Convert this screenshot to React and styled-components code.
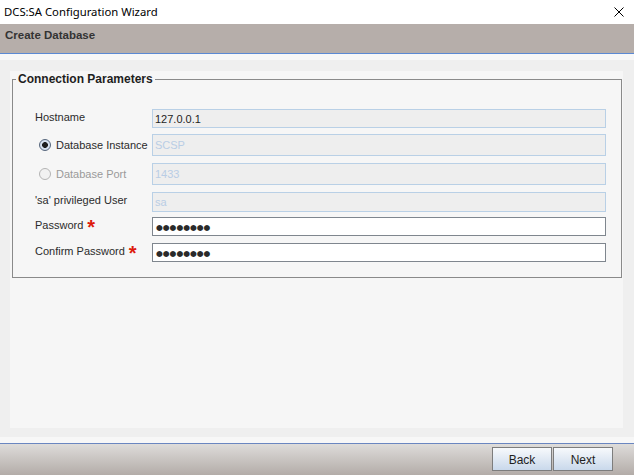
import React from "react";
import styled, { createGlobalStyle } from "styled-components";

const Global = createGlobalStyle`
  html, body { margin: 0; padding: 0; }
  body { width: 634px; height: 475px; overflow: hidden; background: #efefef; }
  * { box-sizing: border-box; }
`;

const Window = styled.div`
  width: 634px;
  height: 475px;
  display: flex;
  flex-direction: column;
  font-family: "Liberation Sans", Arial, sans-serif;
  color: #2b2b2b;
`;

const TitleBar = styled.div`
  height: 24px;
  flex: none;
  background: #ffffff;
  display: flex;
  align-items: center;
  justify-content: space-between;
  padding: 0 10px 0 4px;
`;

const TitleText = styled.span`
  font-family: "Noto Sans", "Open Sans", sans-serif;
  font-size: 11.3px;
  color: #000;
  margin-top: -2px;
`;

const CloseButton = styled.svg`
  width: 10px;
  height: 10px;
  margin-top: -1px;
`;

const Header = styled.div`
  height: 29px;
  flex: none;
  background: #b6aeaa;
  padding: 5px 5px 0;
  font-size: 11.5px;
  font-weight: bold;
  color: #333;
`;

const Rule = styled.div`
  height: 1px;
  flex: none;
  background: ${(p) => p.$color};
`;

const Body = styled.div`
  flex: none;
  height: 389px;
  background: #efefef;
  border-top: 6px solid #f7f7f7;
  border-bottom: 6px solid #f7f7f7;
  padding: 11px 11px 9px 10px;
  display: flex;
`;

const Panel = styled.div`
  flex: 1;
  background: #f6f6f6;
  padding: 1px 1px 0 2px;
`;

const Group = styled.fieldset`
  margin: 0;
  padding: 0 15px 15px 22px;
  border: 1px solid #8a8a8a;
  min-width: 0;
`;

const Legend = styled.legend`
  margin-left: -19px;
  padding: 0 2px;
  font-size: 12px;
  font-weight: bold;
  color: #1e1e1e;
  line-height: 14px;
`;

const Rows = styled.div`
  display: flex;
  flex-direction: column;
  padding-top: 23px;
`;

const Row = styled.div`
  display: grid;
  grid-template-columns: 117px 1fr;
  align-items: center;
  height: ${(p) => p.$h}px;
  margin-top: ${(p) => p.$mt}px;
`;

const Label = styled.div`
  display: flex;
  align-items: center;
  font-size: 11px;
  padding-bottom: ${(p) => p.$lift}px;
  color: ${(p) => (p.$disabled ? "#9a9a9a" : "#2b2b2b")};
  white-space: nowrap;
`;

const Radio = styled.span`
  width: 12px;
  height: 12px;
  border-radius: 50%;
  margin: 0 5px 0 4px;
  flex: none;
  border: 1px solid ${(p) => (p.$checked ? "#55657c" : "#b4b4b4")};
  background: ${(p) =>
    p.$checked
      ? "radial-gradient(circle, #1e1e1e 0 2.6px, #d6e1ef 3.2px 100%)"
      : "#f1f1f1"};
`;

const Star = styled.span`
  color: #dd1a0c;
  font-size: 20px;
  font-weight: bold;
  line-height: 10px;
  height: 10px;
  margin-left: 4px;
  padding-top: 2px;
`;

const Field = styled.div`
  height: 100%;
  display: flex;
  align-items: center;
  padding-left: 2px;
  font-size: 11px;
  border: 1px solid ${(p) => (p.$editable ? "#7f868e" : "#b9d0e6")};
  background: ${(p) => (p.$editable ? "#ffffff" : "#eeeeee")};
  color: ${(p) => (p.$muted ? "#b9cde5" : "#1e1e1e")};
`;

const Dots = styled.span`
  font-family: "DejaVu Sans", sans-serif;
  font-size: 7.8px;
  letter-spacing: 0;
  color: #2a2a2a;
  padding-left: 1px;
  padding-top: 1px;
`;

const Footer = styled.div`
  flex: 1;
  background: linear-gradient(#dedcda, #b3aca8);
  display: flex;
  justify-content: flex-end;
  align-items: flex-start;
  gap: 1px;
  padding: 3px 21px 0 0;
`;

const Button = styled.button`
  width: 60px;
  height: 24px;
  border: 1px solid #7d7d7d;
  background: linear-gradient(#f7f9fc, #c9d8eb);
  font-family: "Liberation Sans", Arial, sans-serif;
  font-size: 12px;
  color: #1e1e1e;
  padding: 1px 0 0;
`;

const fields = [
  { label: "Hostname", value: "127.0.0.1", h: 19, mt: 0, lift: 4 },
  { label: "Database Instance", radio: "on", value: "SCSP", muted: true, h: 22, mt: 6, lift: 0 },
  { label: "Database Port", radio: "off", value: "1433", muted: true, h: 22, mt: 7, lift: 0 },
  { label: "'sa' privileged User", value: "sa", muted: true, h: 20, mt: 7, lift: 4 },
  { label: "Password", required: true, password: true, h: 19, mt: 5, lift: 3 },
  { label: "Confirm Password", required: true, password: true, h: 19, mt: 7, lift: 3 },
];

export default function App() {
  return (
    <>
      <Global />
      <Window>
        <TitleBar>
          <TitleText>DCS:SA Configuration Wizard</TitleText>
          <CloseButton viewBox="0 0 10 10">
            <path d="M0.5 0.5 L9.5 9.5 M9.5 0.5 L0.5 9.5" stroke="#000" strokeWidth="1" fill="none" />
          </CloseButton>
        </TitleBar>
        <Header>Create Database</Header>
        <Rule $color="#5b89d3" />
        <Body>
          <Panel>
            <Group>
              <Legend>Connection Parameters</Legend>
              <Rows>
                {fields.map((f) => (
                  <Row key={f.label} $h={f.h} $mt={f.mt}>
                    <Label $disabled={f.radio === "off"} $lift={f.lift}>
                      {f.radio && <Radio $checked={f.radio === "on"} />}
                      {f.label}
                      {f.required && <Star>*</Star>}
                    </Label>
                    <Field $editable={f.password} $muted={f.muted}>
                      {f.password ? <Dots>●●●●●●●●</Dots> : f.value}
                    </Field>
                  </Row>
                ))}
              </Rows>
            </Group>
          </Panel>
        </Body>
        <Rule $color="#6a86c0" />
        <Footer>
          <Button>Back</Button>
          <Button>Next</Button>
        </Footer>
      </Window>
    </>
  );
}
